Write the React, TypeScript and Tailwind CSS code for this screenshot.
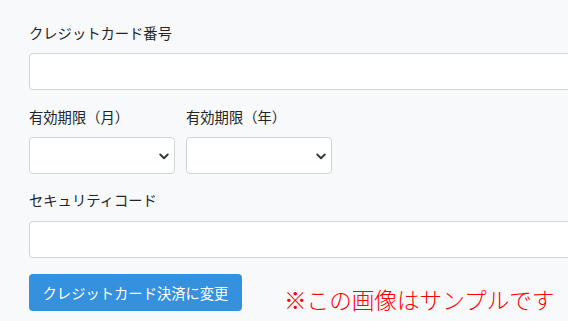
const font = { fontFamily: '"Noto Sans CJK JP", "Noto Sans", sans-serif' };

function Chevron() {
  return (
    <svg
      className="pointer-events-none absolute right-[4px] top-1/2 -translate-y-1/2"
      width="12"
      height="12"
      viewBox="0 0 16 16"
      fill="none"
      stroke="#343a40"
      strokeWidth="2.6"
      strokeLinecap="round"
      strokeLinejoin="round"
    >
      <path d="M3 6l5 5 5-5" />
    </svg>
  );
}

function SelectBox({ label }: { label: string }) {
  return (
    <div className="flex flex-col">
      <label className="mb-[10px] text-[14.3px] leading-[20px] text-[#212529]">{label}</label>
      <div className="relative h-[37px] w-[146px] rounded-[4px] border border-[#ced4da] bg-white">
        <Chevron />
      </div>
    </div>
  );
}

export default function App() {
  return (
    <div className="h-[321px] w-[568px] overflow-hidden bg-[#f8f9fa] pl-[29px] pt-[23px]" style={font}>
      <label className="block text-[14.3px] leading-[20px] text-[#212529]">クレジットカード番号</label>
      <div className="mt-[10px] h-[37px] w-[600px] rounded-[4px] border border-[#ced4da] bg-white" />

      <div className="mt-[17px] flex gap-[11px]">
        <SelectBox label="有効期限（月）" />
        <SelectBox label="有効期限（年）" />
      </div>

      <label className="mt-[16px] block text-[14.3px] leading-[20px] text-[#212529]">セキュリティコード</label>
      <div className="mt-[11px] h-[37px] w-[600px] rounded-[4px] border border-[#ced4da] bg-white" />

      <div className="mt-[16px] flex items-end">
        <button
          type="button"
          className="h-[37px] w-[213px] rounded-[4px] bg-[#3591dd] text-[14.3px] text-white"
        >
          クレジットカード決済に変更
        </button>
        <span className="-mb-[3px] ml-[42px] text-[22.6px] font-light leading-[28px] text-[#ff0000]">
          ※この画像はサンプルです
        </span>
      </div>
    </div>
  );
}
